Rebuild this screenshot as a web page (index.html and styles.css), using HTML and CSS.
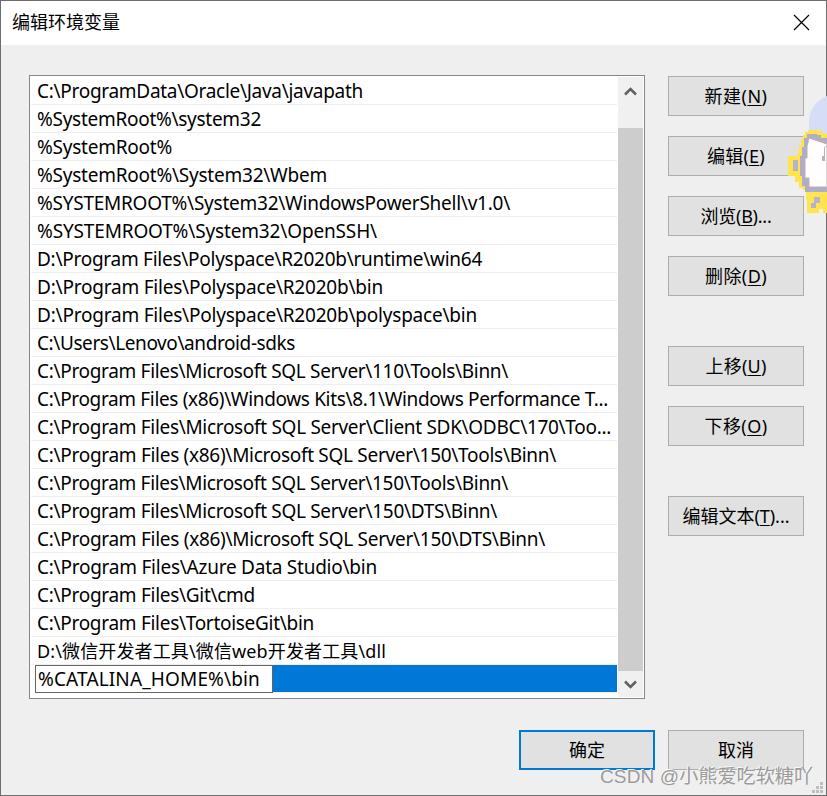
FILE: index.html
```html
<!DOCTYPE html>
<html lang="zh-CN">
<head>
<meta charset="utf-8">
<title>编辑环境变量</title>
<link rel="stylesheet" href="styles.css">
</head>
<body>
<div class="window">
  <header class="titlebar">
    <h1><span data-width="108">编辑环境变量</span></h1>
    <svg class="close" width="17" height="17" viewBox="0 0 17 17"><path d="M1 1 16 16M16 1 1 16"/></svg>
  </header>
  <main class="content">
    <div class="listbox">
      <ul class="rows">
        <li><span data-width="326">C:\ProgramData\Oracle\Java\javapath</span></li>
        <li><span data-width="224">%SystemRoot%\system32</span></li>
        <li><span data-width="135">%SystemRoot%</span></li>
        <li><span data-width="290">%SystemRoot%\System32\Wbem</span></li>
        <li><span data-width="473">%SYSTEMROOT%\System32\WindowsPowerShell\v1.0\</span></li>
        <li><span data-width="340">%SYSTEMROOT%\System32\OpenSSH\</span></li>
        <li><span data-width="445">D:\Program Files\Polyspace\R2020b\runtime\win64</span></li>
        <li><span data-width="346">D:\Program Files\Polyspace\R2020b\bin</span></li>
        <li><span data-width="440">D:\Program Files\Polyspace\R2020b\polyspace\bin</span></li>
        <li><span data-width="258">C:\Users\Lenovo\android-sdks</span></li>
        <li><span data-width="471">C:\Program Files\Microsoft SQL Server\110\Tools\Binn\</span></li>
        <li><span data-width="571">C:\Program Files (x86)\Windows Kits\8.1\Windows Performance T...</span></li>
        <li><span data-width="574">C:\Program Files\Microsoft SQL Server\Client SDK\ODBC\170\Too...</span></li>
        <li><span data-width="519">C:\Program Files (x86)\Microsoft SQL Server\150\Tools\Binn\</span></li>
        <li><span data-width="471">C:\Program Files\Microsoft SQL Server\150\Tools\Binn\</span></li>
        <li><span data-width="460">C:\Program Files\Microsoft SQL Server\150\DTS\Binn\</span></li>
        <li><span data-width="508">C:\Program Files (x86)\Microsoft SQL Server\150\DTS\Binn\</span></li>
        <li><span data-width="340">C:\Program Files\Azure Data Studio\bin</span></li>
        <li><span data-width="218">C:\Program Files\Git\cmd</span></li>
        <li><span data-width="277">C:\Program Files\TortoiseGit\bin</span></li>
        <li class="mixed"><span data-width="349">D:\微信开发者工具\微信web开发者工具\dll</span></li>
        <li class="selected"><div class="editor"><span data-width="222">%CATALINA_HOME%\bin</span></div></li>
      </ul>
      <div class="scrollbar">
        <svg width="13" height="9" viewBox="0 0 13 9"><path d="M1 7.5 6.5 2 12 7.5"/></svg>
        <div class="thumb"></div>
        <svg width="13" height="9" viewBox="0 0 13 9"><path d="M1 1.5 6.5 7 12 1.5"/></svg>
      </div>
    </div>
    <div class="actions">
      <button><span data-width="63">新建(<u>N</u>)</span></button>
      <button><span data-width="58">编辑(<u>E</u>)</span></button>
      <button><span data-width="71">浏览(<u>B</u>)...</span></button>
      <button class="group-end"><span data-width="62">删除(<u>D</u>)</span></button>
      <button><span data-width="61">上移(<u>U</u>)</span></button>
      <button class="group-end"><span data-width="63">下移(<u>O</u>)</span></button>
      <button><span data-width="107">编辑文本(<u>T</u>)...</span></button>
    </div>
  </main>
  <footer class="footer">
    <button class="default">确定</button>
    <button>取消</button>
  </footer>
</div>
<svg class="mascot" width="40" height="122" viewBox="0 0 40 122">
  <path fill="#d5def6" d="M40 0C30 4 22 13 22 26V70H40z"/>
  <path fill="#ffe44d" d="M40 38H36V35H32V34H21V36H18V39H16V44H14V50H12V58H10V60H1V80H8V86H12V92H16V94H19V104H20V117H32V113H36V117H40z"/>
  <path fill="#b0aec6" d="M40 42H34V39H30V38H20V42H17V51H15V60H13V80H15V90H18V96H40z"/>
  <path fill="#b3b3cd" d="M6 64H11V75H6zM27 101H33V107H29V112H24V107H27z"/>
  <path fill="#fffdfd" stroke="#bcaeb2" d="M22 42 40 48V91H22V82H18V62H20V50z"/>
  <path fill="#bcb0b5" d="M40 50H38V64H35V60H37V51zM35 61H38V65H35z"/>
</svg>
<svg class="grip" width="12" height="12" viewBox="0 0 12 12"><path d="M8 0h3v3H8zM4 4h3v3H4zM8 4h3v3H8zM0 8h3v3H0zM4 8h3v3H4zM8 8h3v3H8z"/></svg>
<div class="watermark"><span data-width="213">CSDN @小熊爱吃软糖吖</span></div>
<script src="fit.js"></script>
</body>
</html>
```
FILE: styles.css
```css
* { box-sizing: border-box; }
body {
  margin: 0;
  position: relative;
  width: 827px;
  height: 796px;
  overflow: hidden;
  color: #000;
  font: 18px/28px "Noto Sans", "Noto Sans CJK SC", sans-serif;
}
.window {
  width: 827px;
  height: 796px;
  border: 1px solid #6e6c6e;
  background: #efefef;
}
.titlebar {
  display: flex;
  align-items: center;
  justify-content: space-between;
  height: 44px;
  padding: 0 16px 2px 11px;
  background: #fff;
}
h1 { margin: 0; font-size: 18px; font-weight: 400; line-height: 28px; }
.close path { fill: none; stroke: #000; stroke-width: 1.2; }
.content {
  display: flex;
  align-items: flex-start;
  gap: 23px;
  padding: 30px 22px 0 28px;
}
.listbox {
  display: flex;
  width: 616px;
  height: 624px;
  padding: 1px;
  border: 1px solid #828790;
  background: #fff;
}
.rows { flex: none; width: 586px; margin: 0; padding: 0; list-style: none; font-size: 19px; }
.rows li {
  height: 28px;
  padding-left: 6px;
  border-bottom: 1px solid #efefef;
  line-height: 28px;
  white-space: pre;
}
.rows .mixed { font-size: 18px; line-height: 29px; }
.rows .selected {
  display: flex;
  margin-left: 4px;
  padding-left: 0;
  background: #0078d7;
  background-clip: padding-box;
}
.editor {
  width: 238px;
  height: 28px;
  padding-left: 2px;
  border: 1px solid #646464;
  background: #fff;
  line-height: 26px;
}
.scrollbar {
  display: flex;
  flex-direction: column;
  align-items: center;
  justify-content: space-between;
  width: 25px;
  margin-left: 1px;
  padding: 10px 0 8px;
  background: #f0f0f0;
}
.scrollbar svg path { fill: none; stroke: #606060; stroke-width: 2.5; }
.thumb { width: 25px; height: 543px; margin: 32px 0 9px; background: #cdcdcd; }
.actions { display: flex; flex-direction: column; gap: 20px; padding-top: 1px; }
button {
  width: 136px;
  height: 40px;
  padding: 0;
  border: 1px solid #adadad;
  border-radius: 0;
  background: #e1e1e1;
  color: #000;
  font: inherit;
  white-space: nowrap;
}
.group-end { margin-bottom: 30px; }
u { text-underline-offset: 2px; text-decoration-thickness: 1px; }
.footer { display: flex; justify-content: flex-end; gap: 13px; padding: 31px 22px 0 0; }
.default { border: 2px solid #0078d7; }
.mascot { position: absolute; right: 0; top: 96px; }
.grip { position: absolute; right: 3px; bottom: 2px; }
.grip path { fill: #bfbfbf; }
.watermark {
  position: absolute;
  left: 600px;
  top: 763px;
  color: #9b9b9b;
  font: 19px/28px "Liberation Sans", "Noto Sans CJK SC", sans-serif;
  text-shadow: -1px -1px 0 #f8f8f8;
  white-space: nowrap;
}
```
FILE: fit.js
```js
// Adjusts tracking so every label occupies its intended width.
document.querySelectorAll("[data-width]").forEach(function (label) {
  var natural = label.getBoundingClientRect().width;
  var spacing = (label.dataset.width - natural) / label.textContent.length;
  label.style.letterSpacing = spacing.toFixed(3) + "px";
});
```
